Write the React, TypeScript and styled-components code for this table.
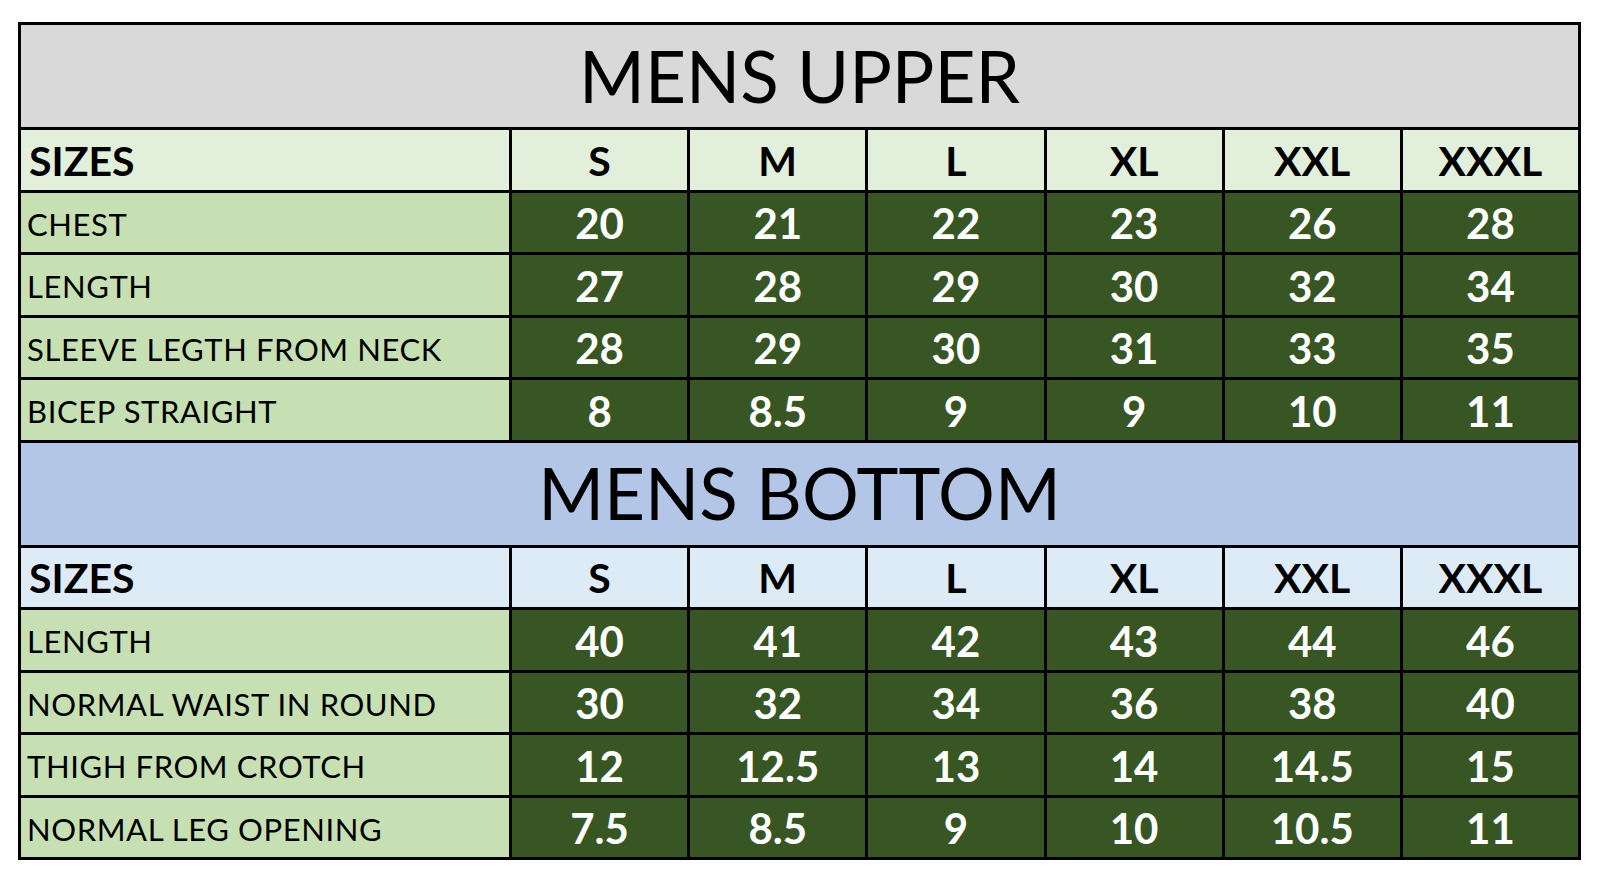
import React from "react";
import styled, { createGlobalStyle } from "styled-components";

const FONT = `Lato, "Open Sans", "Liberation Sans", sans-serif`;

const GlobalStyle = createGlobalStyle`
  html, body {
    margin: 0;
    padding: 0;
    background: #ffffff;
  }
  body {
    font-family: ${FONT};
  }
`;

const Page = styled.div`
  padding: 22px 0 0 18px;
`;

const Chart = styled.div`
  box-sizing: border-box;
  width: 1563px;
  display: grid;
  grid-template-columns: 488px repeat(6, 1fr);
  gap: 3px;
  padding: 3px;
  background: #000000;
  font-family: ${FONT};
`;

const Title = styled.div<{ $bg: string }>`
  grid-column: 1 / -1;
  height: 102px;
  background: ${(p) => p.$bg};
  display: flex;
  align-items: center;
  justify-content: center;
  font-size: 71px;
  font-weight: 400;
  color: #000;
  line-height: 1;
  padding-bottom: 2px;
  box-sizing: border-box;
`;

const Cell = styled.div<{ $bg: string }>`
  height: 59.5px;
  background: ${(p) => p.$bg};
  display: flex;
  align-items: center;
  box-sizing: border-box;
  line-height: 1;
`;

const HeadLabel = styled(Cell)`
  padding: 1px 0 0 8px;
  font-size: 41px;
  font-weight: 700;
  color: #000;
`;

const HeadSize = styled(Cell)`
  justify-content: center;
  padding-top: 1px;
  font-size: 41px;
  font-weight: 700;
  color: #000;
`;

const RowLabel = styled(Cell)`
  padding: 4px 0 0 6px;
  font-size: 31px;
  letter-spacing: 0.6px;
  font-weight: 400;
  color: #000;
  white-space: nowrap;
`;

const Value = styled(Cell)`
  justify-content: center;
  padding-top: 2px;
  font-size: 42px;
  font-weight: 700;
  color: #ffffff;
`;

type Section = {
  title: string;
  titleBg: string;
  headBg: string;
  rows: { label: string; values: string[] }[];
};

const SIZES = ["S", "M", "L", "XL", "XXL", "XXXL"];

const sections: Section[] = [
  {
    title: "MENS UPPER",
    titleBg: "#d9d9d9",
    headBg: "#e2efda",
    rows: [
      { label: "CHEST", values: ["20", "21", "22", "23", "26", "28"] },
      { label: "LENGTH", values: ["27", "28", "29", "30", "32", "34"] },
      { label: "SLEEVE LEGTH FROM NECK", values: ["28", "29", "30", "31", "33", "35"] },
      { label: "BICEP STRAIGHT", values: ["8", "8.5", "9", "9", "10", "11"] },
    ],
  },
  {
    title: "MENS BOTTOM",
    titleBg: "#b4c6e7",
    headBg: "#ddebf7",
    rows: [
      { label: "LENGTH", values: ["40", "41", "42", "43", "44", "46"] },
      { label: "NORMAL WAIST IN ROUND", values: ["30", "32", "34", "36", "38", "40"] },
      { label: "THIGH FROM CROTCH", values: ["12", "12.5", "13", "14", "14.5", "15"] },
      { label: "NORMAL LEG OPENING", values: ["7.5", "8.5", "9", "10", "10.5", "11"] },
    ],
  },
];

const LABEL_BG = "#c6e0b4";
const VALUE_BG = "#375623";

export default function App() {
  return (
    <>
      <GlobalStyle />
      <Page>
        <Chart>
          {sections.map((s) => (
            <React.Fragment key={s.title}>
              <Title $bg={s.titleBg}>{s.title}</Title>
              <HeadLabel $bg={s.headBg}>SIZES</HeadLabel>
              {SIZES.map((z) => (
                <HeadSize key={z} $bg={s.headBg}>
                  {z}
                </HeadSize>
              ))}
              {s.rows.map((r) => (
                <React.Fragment key={r.label}>
                  <RowLabel $bg={LABEL_BG}>{r.label}</RowLabel>
                  {r.values.map((v, i) => (
                    <Value key={i} $bg={VALUE_BG}>
                      {v}
                    </Value>
                  ))}
                </React.Fragment>
              ))}
            </React.Fragment>
          ))}
        </Chart>
      </Page>
    </>
  );
}
